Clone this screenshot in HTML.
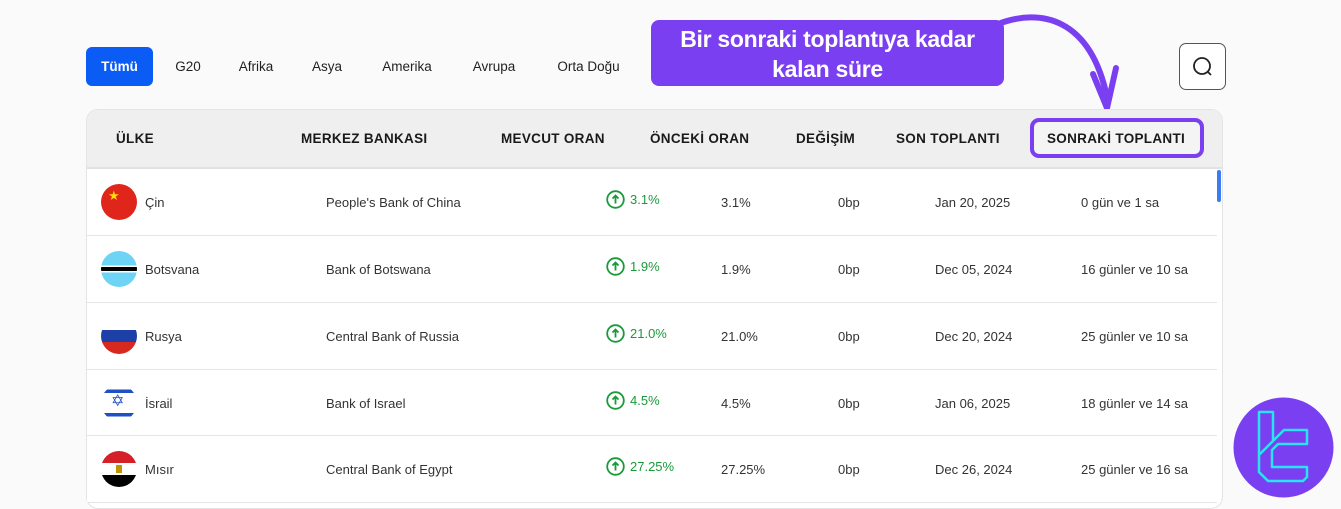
<!DOCTYPE html>
<html><head><meta charset="utf-8"><style>
*{margin:0;padding:0;box-sizing:border-box}
body{width:1341px;height:505px;overflow:hidden;background:#fafafa;font-family:"Liberation Sans",sans-serif;position:relative;color:#222}
.a{position:absolute;white-space:nowrap}
.tab{position:absolute;top:47px;height:39px;font-size:13.5px;line-height:39px;text-align:center;color:#222;background:#fafafa;border-radius:6px}
.hd{position:absolute;font-size:13.5px;font-weight:bold;letter-spacing:.3px;top:131px;color:#1a1a1a}
.row{position:absolute;left:87px;width:1130px;height:67px;border-bottom:1px solid #e6e6e6;background:#fff}
.c{position:absolute;font-size:13px;color:#333;top:26px}
.g{color:#1a9a3a}
.flag{position:absolute;left:14px;top:15px;width:36px;height:36px;border-radius:50%;overflow:hidden}
.up{position:absolute;top:21px}
</style></head><body>
<div class="tab" style="left:86px;width:67px;background:#0a5cf5;color:#fff;font-weight:bold">Tümü</div>
<div class="tab" style="left:162px;width:52px">G20</div>
<div class="tab" style="left:223px;width:66px">Afrika</div>
<div class="tab" style="left:298px;width:58px">Asya</div>
<div class="tab" style="left:365px;width:84px">Amerika</div>
<div class="tab" style="left:458px;width:72px">Avrupa</div>
<div class="tab" style="left:539px;width:99px">Orta Doğu</div>

<div class="a" style="left:651px;top:20px;width:353px;height:66px;background:#7b3ff2;border-radius:8px;color:#fff;font-size:23px;font-weight:bold;text-align:center;line-height:30px;padding-top:4px;letter-spacing:-.3px">Bir sonraki toplantıya kadar<br>kalan süre</div>
<svg class="a" style="left:990px;top:12px" width="140" height="105" viewBox="0 0 140 105"><path d="M8 12 C50 -4 100 5 117 85" fill="none" stroke="#7b3ff2" stroke-width="6" stroke-linecap="round"/><path d="M103 62 L117 96 L126 56" fill="none" stroke="#7b3ff2" stroke-width="6" stroke-linecap="round" stroke-linejoin="round"/></svg>

<div class="a" style="left:1179px;top:43px;width:47px;height:47px;border:1.5px solid #555;border-radius:7px;background:#fff"></div>
<svg class="a" style="left:1191px;top:55px" width="24" height="24" viewBox="0 0 24 24"><circle cx="11" cy="11" r="8" fill="none" stroke="#222" stroke-width="1.8"/><path d="M17 17l3 3" stroke="#222" stroke-width="1.8"/></svg>

<div class="a" style="left:86px;top:109px;width:1137px;height:400px;background:#fff;border:1px solid #e4e4e4;border-radius:12px;overflow:hidden">
<div class="a" style="left:0;top:0;width:1137px;height:59px;background:#efefef;border-bottom:2px solid #e2e2e2"></div>
</div>
<div class="hd" style="left:116px">ÜLKE</div>
<div class="hd" style="left:301px">MERKEZ BANKASI</div>
<div class="hd" style="left:501px">MEVCUT ORAN</div>
<div class="hd" style="left:650px">ÖNCEKİ ORAN</div>
<div class="hd" style="left:796px">DEĞİŞİM</div>
<div class="hd" style="left:896px">SON TOPLANTI</div>
<div class="a" style="left:1030px;top:118px;width:174px;height:40px;border:4px solid #7b3ff2;border-radius:9px;background:#f4f4f4"></div>
<div class="hd" style="left:1047px">SONRAKİ TOPLANTI</div>
<div class="a" style="left:1217px;top:170px;width:4px;height:32px;background:#3b7cf0;border-radius:2px"></div>

<div class="row" style="top:169px"><div class="flag" style="background:#e0251b"><span style="position:absolute;left:7px;top:4px;color:#ffde00;font-size:13px">★</span></div>
<div class="c" style="left:58px">Çin</div><div class="c" style="left:239px">People's Bank of China</div>
<svg class="up" style="left:519px" width="19" height="19" viewBox="0 0 19 19"><circle cx="9.5" cy="9.5" r="8.3" fill="none" stroke="#1a9a3a" stroke-width="1.8"/><path d="M9.5 13.5V5.5M6.5 8.5l3-3 3 3" fill="none" stroke="#1a9a3a" stroke-width="1.8"/></svg><div class="c g" style="left:543px;top:23px">3.1%</div>
<div class="c" style="left:634px">3.1%</div><div class="c" style="left:751px">0bp</div><div class="c" style="left:848px">Jan 20, 2025</div><div class="c" style="left:994px">0 gün ve 1 sa</div></div>

<div class="row" style="top:236px"><div class="flag" style="background:linear-gradient(#6dd4f5 0 40%,#fff 40% 44%,#000 44% 56%,#fff 56% 60%,#6dd4f5 60%)"></div>
<div class="c" style="left:58px">Botsvana</div><div class="c" style="left:239px">Bank of Botswana</div>
<svg class="up" style="left:519px" width="19" height="19" viewBox="0 0 19 19"><circle cx="9.5" cy="9.5" r="8.3" fill="none" stroke="#1a9a3a" stroke-width="1.8"/><path d="M9.5 13.5V5.5M6.5 8.5l3-3 3 3" fill="none" stroke="#1a9a3a" stroke-width="1.8"/></svg><div class="c g" style="left:543px;top:23px">1.9%</div>
<div class="c" style="left:634px">1.9%</div><div class="c" style="left:751px">0bp</div><div class="c" style="left:848px">Dec 05, 2024</div><div class="c" style="left:994px">16 günler ve 10 sa</div></div>

<div class="row" style="top:303px"><div class="flag" style="background:linear-gradient(#fff 0 33%,#1c3fa8 33% 66%,#d8291e 66%)"></div>
<div class="c" style="left:58px">Rusya</div><div class="c" style="left:239px">Central Bank of Russia</div>
<svg class="up" style="left:519px" width="19" height="19" viewBox="0 0 19 19"><circle cx="9.5" cy="9.5" r="8.3" fill="none" stroke="#1a9a3a" stroke-width="1.8"/><path d="M9.5 13.5V5.5M6.5 8.5l3-3 3 3" fill="none" stroke="#1a9a3a" stroke-width="1.8"/></svg><div class="c g" style="left:543px;top:23px">21.0%</div>
<div class="c" style="left:634px">21.0%</div><div class="c" style="left:751px">0bp</div><div class="c" style="left:848px">Dec 20, 2024</div><div class="c" style="left:994px">25 günler ve 10 sa</div></div>

<div class="row" style="top:370px;height:66px"><div class="flag" style="background:linear-gradient(#fff 0 12%,#1e4fc4 12% 22%,#fff 22% 78%,#1e4fc4 78% 88%,#fff 88%)"><span style="position:absolute;left:10px;top:6px;color:#1e4fc4;font-size:16px">✡</span></div>
<div class="c" style="left:58px">İsrail</div><div class="c" style="left:239px">Bank of Israel</div>
<svg class="up" style="left:519px" width="19" height="19" viewBox="0 0 19 19"><circle cx="9.5" cy="9.5" r="8.3" fill="none" stroke="#1a9a3a" stroke-width="1.8"/><path d="M9.5 13.5V5.5M6.5 8.5l3-3 3 3" fill="none" stroke="#1a9a3a" stroke-width="1.8"/></svg><div class="c g" style="left:543px;top:23px">4.5%</div>
<div class="c" style="left:634px">4.5%</div><div class="c" style="left:751px">0bp</div><div class="c" style="left:848px">Jan 06, 2025</div><div class="c" style="left:994px">18 günler ve 14 sa</div></div>

<div class="row" style="top:436px"><div class="flag" style="background:linear-gradient(#d62027 0 33%,#fff 33% 66%,#000 66%)"><span style="position:absolute;left:15px;top:14px;width:6px;height:8px;background:#c09300"></span></div>
<div class="c" style="left:58px">Mısır</div><div class="c" style="left:239px">Central Bank of Egypt</div>
<svg class="up" style="left:519px" width="19" height="19" viewBox="0 0 19 19"><circle cx="9.5" cy="9.5" r="8.3" fill="none" stroke="#1a9a3a" stroke-width="1.8"/><path d="M9.5 13.5V5.5M6.5 8.5l3-3 3 3" fill="none" stroke="#1a9a3a" stroke-width="1.8"/></svg><div class="c g" style="left:543px;top:23px">27.25%</div>
<div class="c" style="left:634px">27.25%</div><div class="c" style="left:751px">0bp</div><div class="c" style="left:848px">Dec 26, 2024</div><div class="c" style="left:994px">25 günler ve 16 sa</div></div>

<svg class="a" style="left:1233px;top:397px" width="101" height="101" viewBox="0 0 101 101"><circle cx="50.5" cy="50.5" r="50" fill="#7b3ff2"/><path d="M26 15 H40 V44 L51 33 H74 V47 H45 L39 53 V70 H74 V80 L70 84 H35 L26 75 V58 Z M26 58 L40 44" fill="none" stroke="#29e3f0" stroke-width="2.5" stroke-linejoin="round"/></svg>
</body></html>
